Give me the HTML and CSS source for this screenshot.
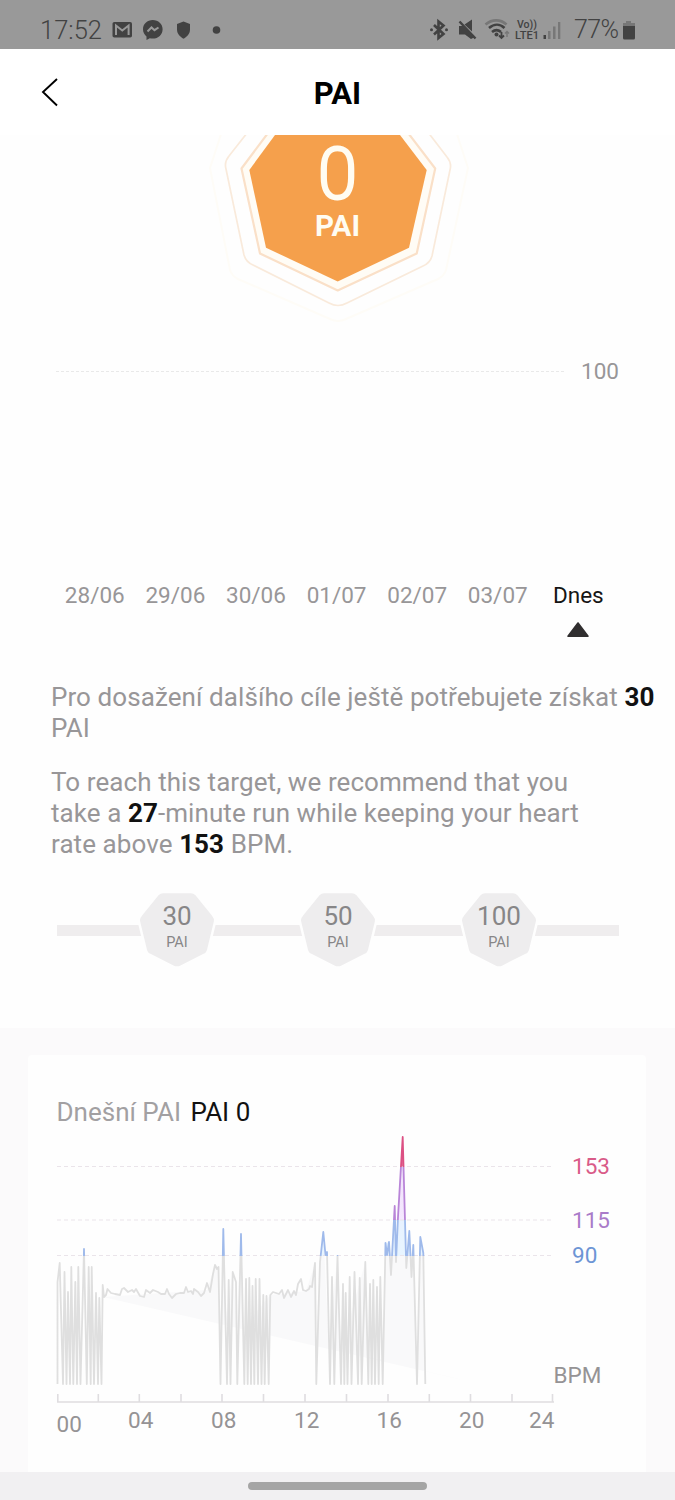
FILE: index.html
```html
<!DOCTYPE html>
<html lang="cs">
<head>
<meta charset="utf-8">
<title>PAI</title>
<link rel="stylesheet" href="styles.css">
</head>
<body>
<div class="status">
  <span class="clock">17:52</span>
  <svg class="status-left" width="114" height="24" viewBox="110 18 114 24">
    <rect x="112.500" y="22" width="19.500" height="15.500" rx="1.800" fill="#424242"/>
    <path d="M116 35V25.500l6.300 5 6.300-5V35" fill="none" stroke="#999" stroke-width="2"/>
    <path d="M152.800 20c-5.600 0-9.800 4-9.800 9.200 0 3 1.400 5.500 3.500 7.200V40l3.300-1.800c1 .3 2 .4 3 .4 5.600 0 9.800-4.200 9.800-9.400S158.400 20 152.800 20z" fill="#424242"/>
    <path d="M147.500 31.500l4-4 3 2.700 4-2.700" fill="none" stroke="#999" stroke-width="2"/>
    <path d="M183.500 21.500l6.500 2.400v5.600c0 4.300-3 7.300-6.500 9.300-3.500-2-6.500-5-6.500-9.300v-5.600z" fill="#424242"/>
    <circle cx="216.500" cy="30" r="3.800" fill="#424242"/>
  </svg>
  <svg class="status-right" width="136" height="26" viewBox="428 17 136 26">
    <g fill="none" stroke="#424242" stroke-width="2.600">
      <path d="M434 25l9.500 9-5 4V21.500l5 4-9.500 9"/>
      <path d="M459.500 21.500l16 17" stroke-width="2.400"/>
      <path d="M489 28c5-4.300 11-4.300 15.500 0M492 32c3-2.500 6-2.500 9 0"/>
      <path d="M485.500 24.500c6.500-5.500 15-5.500 21 0" stroke="#777"/>
      <path d="M501.500 32v6m-2.500-2.500l2.500 2.500 2.500-2.500" stroke-width="1.800"/>
      <path d="M507 37v-5.500m-2 2l2-2 2 2" stroke="#777" stroke-width="1.400"/>
    </g>
    <path d="M459 26h4l11 11.500-3 1.500-6-4.500h-6zM464.500 24.500l7.500-5v12z" fill="#424242"/>
    <circle cx="431.500" cy="29.800" r="1.500" fill="#424242"/><circle cx="446.500" cy="29.800" r="1.500" fill="#424242"/>
    <circle cx="496.500" cy="34.500" r="2" fill="#424242"/>
    <text class="volte" x="517" y="28" textLength="20" lengthAdjust="spacingAndGlyphs">Vo))</text>
    <text class="volte" x="515" y="39" textLength="24" lengthAdjust="spacingAndGlyphs">LTE1</text>
    <path d="M543.500 35h2.500v4h-2.500z" fill="#424242"/>
    <path d="M548 31h2.500v8H548zm5-4.500h2.500V39H553zm5-4.500h2.300v17H558z" fill="#777"/>
  </svg>
  <span class="battery">77%</span>
  <svg class="battery-icon" width="14" height="22" viewBox="0 0 14 22"><path d="M4 2h5v2.500H4zM1 4h12v3H1z" fill="#777"/><path d="M1 7h12v12a1.500 1.500 0 0 1-1.500 1.500h-9A1.500 1.500 0 0 1 1 19z" fill="#424242"/></svg>
</div>
<header class="header">
  <svg class="back" width="20" height="32" viewBox="40 77 20 32"><path d="M57 79L43 92l14 13.500" fill="none" stroke="#000" stroke-width="1.900"/></svg>
  <h1 class="title">PAI</h1>
</header>
<main>
  <section class="hero">
    <svg width="675" height="200" viewBox="0 135 675 200">
      <g fill="none" stroke-linejoin="round">
        <path d="M224 125L210 168l20 102q2 6 8 9l92 40q8 4 16 0l92-40q6-3 8-9l22-102-14-43" stroke="#fefcf7" stroke-width="2"/>
        <path d="M251 128L229 156q-5 6-3 13L244 255q2 7 9 10L329 303q9 5 18 0L423 266q7-3 9-10L450 170q2-7-3-13L424 127" stroke="#f9eadb" stroke-width="1.700"/>
        <path d="M274 125L241.500 168.500 260 253.500l77.700 37 79-37 18.500-85L402 125" fill="#fffcf5" stroke="#fae0c8" stroke-width="2.200"/>
      </g>
      <path d="M275 135H400L426.700 170 409 247.700 337.700 281.500 266 247.700 249.300 170z" fill="#f5a04c"/>
      <text class="hero-value" x="337.500" y="198.500" textLength="40" lengthAdjust="spacingAndGlyphs">0</text>
      <text class="hero-unit" x="337.500" y="236">PAI</text>
    </svg>
  </section>
  <section class="week">
    <div class="goal"><span class="goal-line"></span><span class="goal-label">100</span></div>
    <div class="days">
      <span>28/06</span><span>29/06</span><span>30/06</span><span>01/07</span><span>02/07</span><span>03/07</span><span class="today">Dnes</span>
    </div>
    <svg class="marker" width="24" height="17" viewBox="0 0 24 17"><path d="M12 2L22 15.200H2z" fill="#302e2f" stroke="#302e2f" stroke-width="1.600" stroke-linejoin="round"/></svg>
  </section>
  <section class="advice">
    <p>Pro dosažení dalšího cíle ještě potřebujete získat <b>30</b><br>PAI</p>
    <p>To reach this target, we recommend that you<br>take a <b>27</b>-minute run while keeping your heart<br>rate above <b>153</b> BPM.</p>
  </section>
  <section class="steps">
    <div class="step"><svg class="step-shape" viewBox="0 0 82 80"><use href="#hept"/></svg><span class="step-value">30</span><span class="step-unit">PAI</span></div>
    <div class="step"><svg class="step-shape" viewBox="0 0 82 80"><use href="#hept"/></svg><span class="step-value">50</span><span class="step-unit">PAI</span></div>
    <div class="step"><svg class="step-shape" viewBox="0 0 82 80"><path id="hept" d="M22 4q2-2 5-2H55q3 0 5 2L77 25q3 3 2 7L72 61q-1 3-4 4L45 76.500q-4 2-8 0L14 65q-3-1-4-4L3 32q-1-4 2-7z" fill="#eeedee" stroke="#fefefe" stroke-width="2.500"/></svg><span class="step-value">100</span><span class="step-unit">PAI</span></div>
  </section>
</main>
<section class="lower">
  <div class="card">
    <h2 class="card-title"><span>Dnešní PAI</span> PAI 0</h2>
    <svg class="chart" width="618" height="315" viewBox="28 1130 618 315">
      <defs>
        <linearGradient id="zones" gradientUnits="userSpaceOnUse" x1="0" y1="1130" x2="0" y2="1390">
          <stop offset=".142" stop-color="#dc5083"/><stop offset=".142" stop-color="#b985d8"/>
          <stop offset=".346" stop-color="#b985d8"/><stop offset=".346" stop-color="#9fbaeb"/>
          <stop offset=".483" stop-color="#9fbaeb"/><stop offset=".483" stop-color="#dfdfdf"/>
        </linearGradient>
        <linearGradient id="area" gradientUnits="userSpaceOnUse" x1="0" y1="1130" x2="0" y2="1390">
          <stop offset=".142" stop-color="#e07799"/><stop offset=".142" stop-color="#f0e3fa"/>
          <stop offset=".346" stop-color="#f5e8ff"/><stop offset=".346" stop-color="#e8f2ff"/>
          <stop offset=".483" stop-color="#e8f5ff"/><stop offset=".483" stop-color="#f9f9fa"/>
        </linearGradient>
      </defs>
      <path d="M103 1297L207 1290 215 1265 218.500 1267 219.300 1320 222 1300 223.300 1229 225.500 1320 232.700 1272 237 1325 241 1234 244 1327 270.300 1295 306 1291 315 1263 316 1344 320 1262 323.300 1232 328.500 1340 337.500 1256 341 1350 365.300 1262 369 1357 383 1360 385.500 1243 389 1242 391 1275 394.700 1206 396 1262 398 1217 402.700 1137 406.300 1268 409.300 1231 411.500 1277 413.300 1245 416.500 1369 418 1369 420.300 1237 423.300 1253 425 1371 480 1384z" fill="url(#area)"/>
      <path d="M57 1166.500H554M57 1220H554M57 1255.500H554" fill="none" stroke="#eae4ea" stroke-width="1.200" stroke-dasharray="4 3"/>
      <path d="M57.500 1384V1282L59.700 1263 63 1384 64.500 1272 66.500 1384 68 1292 70 1384 71.300 1267 73.300 1384 75.300 1282 77 1384 78.300 1267 80.500 1384 84 1249 86.800 1384 88.700 1267 90.700 1384 91.700 1267 94 1384 96 1293 98 1384 99.300 1298 101.500 1384 102.700 1285 104 1297 106 1295 107.500 1289 111 1293 115 1294 120 1295 122 1289 124 1288 128 1292 132 1290 134 1292 136 1289 140 1296 144 1297 146 1290 150 1293 153 1290 158 1292 161 1294 165 1294 167 1289 169 1294 172 1298 176 1294 180 1293 184 1293 186 1287 188 1292 191 1291 193 1294 194 1289 198 1292 201 1296 204 1293 207 1283 210 1292 213 1274 215 1265 217 1269 218.500 1267 220.500 1384 223.300 1229 227 1384 228.700 1280 230.500 1384 232.700 1272 236 1282 237.300 1384 241 1234 244.300 1384 246 1279 247.700 1384 249.300 1278 251 1384 252.500 1286 254.300 1384 255.700 1279 258 1384 259.500 1279 261.500 1384 263.300 1295 264.700 1384 266.500 1296 268.700 1384 270.300 1295 273 1292 276 1293 279 1294 282 1290 284 1298 288 1290 291 1297 294 1291 296 1295 298 1284 301 1279 303 1290 306 1291 309 1289 310 1286 312 1287 315 1263 316.300 1384 320 1262 323.300 1232 325.500 1255 327 1252 330 1384 332 1277 334.300 1384 337.500 1256 341 1384 343 1284 344.300 1384 345.700 1293 347.500 1384 349.700 1277 351.500 1384 354.500 1272 358 1384 359.700 1278 361.700 1384 365.300 1262 368.300 1384 370 1284 371.700 1384 373.300 1280 375 1384 377 1287 378.700 1384 380.300 1277 382.700 1384 385.500 1243 387 1255 389 1242 391 1275 394.700 1206 396 1262 398 1217 402.700 1137 406.300 1268 409.300 1231 411.500 1277 413.300 1245 417 1384 420.300 1237 423.300 1253 425.300 1384" fill="none" stroke="url(#zones)" stroke-width="1.800" stroke-linejoin="round"/>
      <path d="M57 1402H554M57.800 1394v8M98.300 1394v8M139.300 1394v8M181 1394v8M222 1394v8M263.500 1394v8M305 1394v8M346.500 1394v8M388 1394v8M429.300 1394v8M470.500 1394v8M512 1394v8M552.500 1394v8" fill="none" stroke="#dfdde0" stroke-width="1.600"/>
      <g class="axis">
        <text x="56.500" y="1432">00</text><text x="128" y="1428">04</text><text x="211" y="1428">08</text><text x="294" y="1428">12</text><text x="376.500" y="1428">16</text><text x="459" y="1428">20</text><text x="529" y="1428">24</text>
        <text x="553.500" y="1383">BPM</text>
        <text class="zone-high" x="572" y="1174">153</text>
        <text class="zone-mid" x="572" y="1228">115</text>
        <text class="zone-low" x="572" y="1263">90</text>
      </g>
    </svg>
  </div>
</section>
<footer class="nav"><span class="pill"></span></footer>
</body>
</html>
```
FILE: styles.css
```css
* { box-sizing: border-box; }
body {
  margin: 0;
  width: 675px;
  height: 1500px;
  overflow: hidden;
  display: flex;
  flex-direction: column;
  background: #fefefe;
  font-family: Roboto, "Liberation Sans", sans-serif;
  color: #989698;
}
svg { display: block; flex: none; }
.status {
  height: 49px;
  flex: none;
  display: flex;
  align-items: center;
  padding: 11px 0 0 40px;
  background: #999;
  color: #424242;
  font-size: 25.500px;
  line-height: 40px;
}
.clock { width: 70px; font-weight: 300; }
.status-right { margin-left: 204px; }
.battery { width: 58px; padding-left: 10px; font-size: 25px; letter-spacing: -.6px; font-weight: 300; white-space: nowrap; }
.battery-icon { margin-top: -1px; }
.volte { font-size: 11.500px; font-weight: 500; fill: #424242; }
.header { height: 86px; flex: none; display: grid; grid-template-columns: 100px 1fr 100px; background: #fff; }
.back { margin: 28px 0 0 40px; }
.title { margin: 0; text-align: center; font-size: 31px; line-height: 90px; font-weight: 700; color: #000; }
.hero { height: 200px; }
.hero-value { font-size: 73px; font-weight: 300; fill: #fffcf2; stroke: #fffcf2; stroke-width: 2px; text-anchor: middle; }
.hero-unit { font-size: 29.500px; font-weight: 700; fill: #fffcf2; text-anchor: middle; }
.week { height: 335px; padding-top: 20px; font-size: 22.500px; }
.goal { display: flex; align-items: center; height: 32px; padding-left: 56px; }
.goal-line { width: 508px; margin-right: 17px; border-top: 1px dashed #e9e9e9; }
.days { display: grid; grid-template-columns: repeat(7, 80.600px); justify-items: center; width: 565px; margin: 192px 0 0 54.500px; line-height: 32px; }
.today { color: #151515; }
.marker { margin: 10px 0 0 566px; }
.advice { padding: 12px 0 0 51px; font-size: 26px; line-height: 30.700px; letter-spacing: .08px; white-space: nowrap; }
.advice p { margin: 0 0 24px; }
.advice b { color: #111; }
.steps {
  display: flex;
  justify-content: space-between;
  width: 562px;
  height: 80px;
  margin: 30px 0 0 57px;
  padding: 0 79px;
  background: linear-gradient(#efedee, #efedee) 0 35px / 100% 11px no-repeat;
}
.step { display: grid; width: 82px; height: 80px; grid-template-rows: 40px 40px; justify-items: center; }
.step-shape { grid-area: 1 / 1 / 3 / 2; width: 82px; height: 80px; }
.step-value { grid-area: 1 / 1; font-size: 26px; line-height: 52px; color: #878687; }
.step-unit { grid-area: 2 / 1; font-size: 14.500px; line-height: 26px; color: #878687; }
.lower { height: 444px; margin-top: auto; flex: none; padding: 27px 29px 0 28px; background: #fbfafb; }
.card { height: 417px; background: #fefefe; border-radius: 4px 4px 0 0; }
.card-title { margin: 0; padding: 41px 0 0 28.500px; height: 75px; font-size: 26px; line-height: 32px; font-weight: 400; color: #111; }
.card-title span { color: #a2a0a2; margin-right: 3px; }
.axis text { font-size: 22.500px; fill: #959395; }
.axis .zone-high { fill: #d95b88; }
.axis .zone-mid { fill: #a97bc9; }
.axis .zone-low { fill: #6d95d5; }
.nav { height: 28px; flex: none; background: #f1f0f2; padding: 10px 0 0 248px; }
.pill { display: block; width: 179px; height: 8px; border-radius: 4px; background: #a5a5a5; }
```
